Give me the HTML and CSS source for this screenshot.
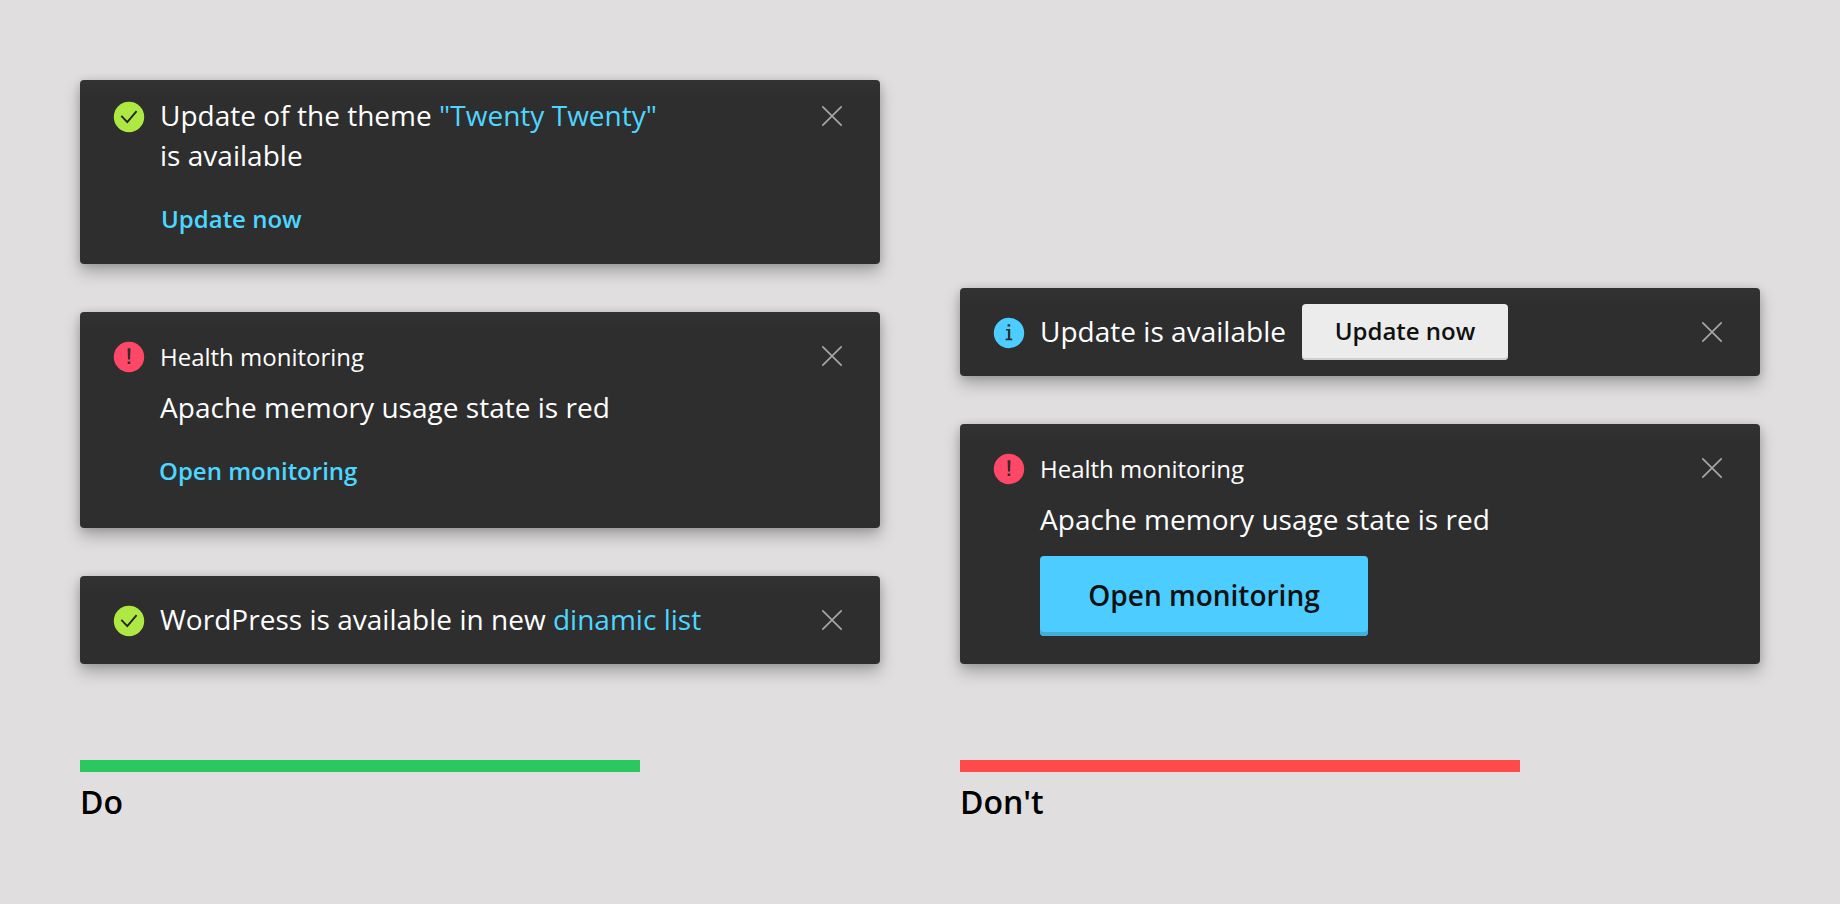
FILE: index.html
```html
<!DOCTYPE html>
<html lang="en">
<head>
<meta charset="utf-8">
<title>Toast actions</title>
<link rel="stylesheet" href="styles.css">
</head>
<body>
<svg class="defs" width="0" height="0">
  <symbol id="i-ok" viewBox="0 0 34 34"><circle cx="17" cy="17" r="15.2" fill="#aee842"/><path d="M9.3 15.8 15.3 22.2 24.6 11.2" fill="none" stroke="#222" stroke-width="1.8"/></symbol>
  <symbol id="i-error" viewBox="0 0 34 34"><circle cx="17" cy="17" r="15.2" fill="#ff4867"/><path d="M15.6 8.2h2.9l-.4 11.2h-2.1zM15.7 21.6h2.6v2.4h-2.6z" fill="#2e2e2e"/></symbol>
  <symbol id="i-info" viewBox="0 0 34 34"><circle cx="17" cy="17" r="15.2" fill="#4dccff"/><path d="M15.6 8.2h2.6v2.3h-2.6zM14 12.9h4.2v9.7h2v1.6h-6.6v-1.6h2.3v-8.1H14z" fill="#2e2e2e"/></symbol>
  <symbol id="i-close" viewBox="0 0 32 32"><path d="M6.3 6.3 25.7 25.7M25.7 6.3 6.3 25.7" fill="none" stroke="#a6a6a6" stroke-width="1.7"/></symbol>
</svg>
<main class="board">
  <section class="column">
    <div class="stack">
      <article class="toast toast-two-line">
        <svg class="icon"><use href="#i-ok"/></svg>
        <div class="content">
          <p class="message">Update of the theme <a class="link">"Twenty Twenty"</a><br>is available</p>
          <a class="action">Update now</a>
        </div>
        <svg class="close"><use href="#i-close"/></svg>
      </article>
      <article class="toast toast-titled">
        <svg class="icon"><use href="#i-error"/></svg>
        <div class="content">
          <h3 class="title">Health monitoring</h3>
          <p class="message">Apache memory usage state is red</p>
          <a class="action">Open monitoring</a>
        </div>
        <svg class="close"><use href="#i-close"/></svg>
      </article>
      <article class="toast">
        <svg class="icon"><use href="#i-ok"/></svg>
        <div class="content">
          <p class="message">WordPress is available in new <a class="link">dinamic list</a></p>
        </div>
        <svg class="close"><use href="#i-close"/></svg>
      </article>
    </div>
    <footer class="verdict verdict-do">Do</footer>
  </section>
  <section class="column">
    <div class="stack">
      <article class="toast toast-inline">
        <svg class="icon"><use href="#i-info"/></svg>
        <div class="content content-row">
          <p class="message">Update is available</p>
          <button class="button">Update now</button>
        </div>
        <svg class="close"><use href="#i-close"/></svg>
      </article>
      <article class="toast toast-titled toast-button">
        <svg class="icon"><use href="#i-error"/></svg>
        <div class="content">
          <h3 class="title">Health monitoring</h3>
          <p class="message">Apache memory usage state is red</p>
          <button class="button button-primary">Open monitoring</button>
        </div>
        <svg class="close"><use href="#i-close"/></svg>
      </article>
    </div>
    <footer class="verdict verdict-dont">Don't</footer>
  </section>
</main>
</body>
</html>
```
FILE: styles.css
```css
* { box-sizing: border-box; }
body { margin: 0; background: #e0dedf; font-family: "Open Sans", "Noto Sans", sans-serif; }
.defs { display: block; }
.board { display: flex; gap: 80px; height: 904px; padding: 80px; }
.column { width: 800px; }
.stack { display: flex; flex-direction: column; justify-content: flex-end; gap: 48px; height: 584px; }
.toast {
  display: flex;
  align-items: flex-start;
  height: 88px;
  padding: 23px 32px;
  border-radius: 4px;
  background: linear-gradient(#323232, #2e2e2e 16px);
  box-shadow: 0 8px 16px rgba(0, 0, 0, .26), 0 1px 8px rgba(0, 0, 0, .14);
  color: #fff;
}
.toast-two-line { height: 184px; padding-top: 15px; }
.toast-titled { height: 216px; padding-top: 29px; }
.toast-button { height: 240px; }
.toast-inline { padding-top: 16px; }
.icon { flex: none; width: 34px; height: 34px; margin: 5px 14px 0 0; }
.close { flex: none; width: 32px; height: 32px; margin-top: 5px; }
.toast-titled .icon { margin-top: -1px; }
.toast-titled .close { margin-top: -1px; }
.toast-inline .icon, .toast-inline .close { margin-top: 12px; }
.content { flex: 1; }
.content-row { display: flex; gap: 16px; }
.message { margin: 0; font-size: 28px; line-height: 40px; letter-spacing: .02px; white-space: nowrap; }
.content-row .message { margin-top: 7px; }
.title { margin: 0 0 14px; font-size: 24px; font-weight: 400; line-height: 32px; }
.link { color: #4dd6ff; }
.action { display: block; margin-top: 28px; color: #4dd6ff; font-size: 24px; font-weight: 600; line-height: 32px; }
.toast-two-line .action { margin-left: 1px; }
.toast-titled .action { margin-left: -1px; }
.button {
  width: 206px;
  height: 56px;
  padding: 0 0 2px;
  border: 0;
  border-radius: 4px;
  background: #ececec;
  box-shadow: inset 0 -2px #cfd0cf;
  color: #111;
  font: 600 24px/32px "Open Sans", "Noto Sans", sans-serif;
}
.button-primary {
  display: block;
  width: 328px;
  height: 80px;
  margin-top: 17px;
  padding: 0 0 2px;
  background: #4dccff;
  box-shadow: inset 0 -4px #42aeda;
  font-size: 28px;
  line-height: 40px;
}
.verdict {
  width: 560px;
  margin-top: 96px;
  padding-top: 8px;
  border-top: 12px solid #29c960;
  color: #000;
  font-size: 32px;
  font-weight: 600;
  line-height: 44px;
}
.verdict-dont { border-top-color: #ff4a4a; }
```
